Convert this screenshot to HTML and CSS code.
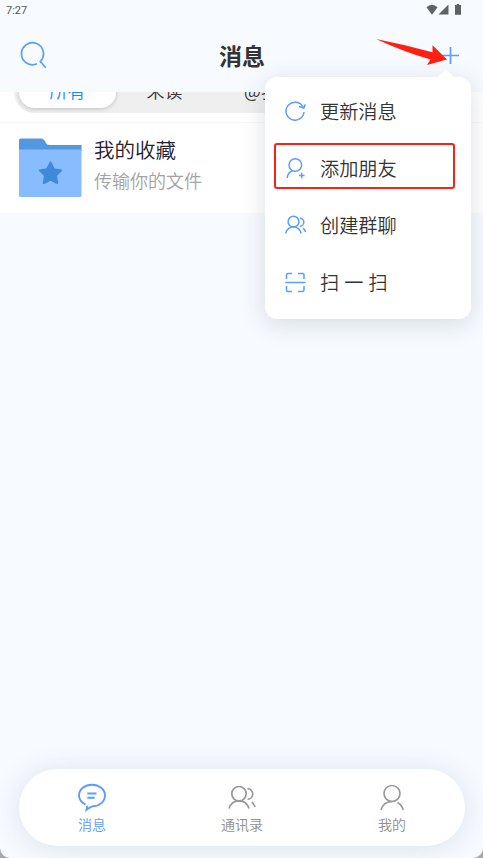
FILE: index.html
```
<!DOCTYPE html>
<html lang="zh-CN">
<head>
	<meta charset="utf-8">
	<meta name="viewport" content="width=device-width, initial-scale=1">
	<title>消息</title>
	<link rel="stylesheet" href="styles.css">
</head>
<body>
	<div class="screen">
		<div class="top">
			<div class="status">
				<span>7:27</span>
				<svg class="status-icons" width="36" height="12" viewBox="0 0 36 12">
					<path d="M0.5 3.2Q6 -1.8 11.5 3.2L6 10.8Z"/>
					<path d="M22.5 0.5V10.5H12.5Z"/>
					<path d="M30.8 0H33.2V1H35V10.8H29V1H30.8Z"/>
				</svg>
			</div>
			<div class="header">
				<svg class="icon" width="28" height="28" viewBox="0 0 28 28">
					<path d="M17 22.8A11 11 0 1 1 20.3 20.5L25.8 26.8" stroke-width="1.7"/>
				</svg>
				<h1>消息</h1>
				<svg class="icon plus" width="20" height="20" viewBox="0 0 20 20">
					<path d="M1.5 10.5H19M10.5 2V19" stroke-width="1.7"/>
				</svg>
			</div>
		</div>

		<div class="tabs-wrap">
			<div class="tabs">
				<div class="tab active">所有</div>
				<div class="tab">未读</div>
				<div class="tab">@我</div>
			</div>
		</div>

		<div class="chat">
			<svg class="folder" width="63" height="60" viewBox="0 0 63 60">
				<path d="M0 12V2Q0 .5 1.5 .5H22Q25 .5 27 5Q28 7 30 7H62.5V13H0Z" fill="#5298de"/>
				<path d="M0 11.5H62.5V57.5Q62.5 59 61 59H1.5Q0 59 0 57.5Z" fill="#87bcff"/>
				<path d="M31.5 24.5L34.9 31.3L42.2 32.4L37 37.6L38.2 45L31.5 41.7L24.8 45L26 37.6L20.8 32.4L28.1 31.3Z" fill="#3f8ad8" stroke="#3f8ad8" stroke-width="2" stroke-linejoin="round"/>
			</svg>
			<div class="chat-text">
				<div class="name">我的收藏</div>
				<div class="desc">传输你的文件</div>
			</div>
		</div>

		<div class="nav">
			<div class="nav-item active">
				<svg class="icon" width="30" height="30" viewBox="0 0 30 30">
					<path d="M8.5 22.7C4.5 20.5 2 17 2 13.5C2 7.3 7.8 2.7 15 2.7S28 7.5 28 13.5S22.5 24.3 15.5 24.3Q13 25 9.5 27.7L10.3 23.8M10.3 11.5H19.5M10.3 15.7H17.7" stroke-width="1.9"/>
				</svg>
				<span>消息</span>
			</div>
			<div class="nav-item">
				<svg class="icon" width="30" height="30" viewBox="0 0 30 30">
					<circle cx="12" cy="11.7" r="7.2"/>
					<path d="M2 26.5Q4.5 18.9 12 18.9Q19.5 18.9 22 26.5M20.5 6.7A5.3 5.3 0 1 1 20.5 17.3M24.8 20Q27 21.5 28 25"/>
				</svg>
				<span>通讯录</span>
			</div>
			<div class="nav-item">
				<svg class="icon" width="30" height="30" viewBox="0 0 30 30">
					<circle cx="15" cy="11.5" r="8"/>
					<path d="M4 28Q6 20 15 19.5M20.5 20.5Q25 23 26.3 28"/>
				</svg>
				<span>我的</span>
			</div>
		</div>

		<!-- 右上角選單 -->
		<div class="menu">
			<div class="menu-item">
				<svg class="icon" width="24" height="24" viewBox="0 0 24 24">
					<path d="M21 13A9 9 0 1 1 20 8"/>
					<path d="M16 7.5L20.7 9L22.2 5.5" stroke-width="1.8"/>
				</svg>
				<span>更新消息</span>
			</div>
			<div class="menu-item marked">
				<svg class="icon" width="24" height="24" viewBox="0 0 24 24">
					<circle cx="12.3" cy="9" r="6.3"/>
					<path d="M4.2 22Q5 16 9.8 14.8M16 19.5H21.5M18.7 16.8V22.3"/>
				</svg>
				<span>添加朋友</span>
			</div>
			<div class="menu-item">
				<svg class="icon" width="24" height="24" viewBox="0 0 24 24">
					<circle cx="10.5" cy="8.7" r="5.4"/>
					<path d="M2.5 20.5Q4.5 14.1 10.5 14.1Q16.5 14.1 18.2 20.5M16.8 5.2A4 4 0 1 1 16.8 13.2M20 15.2Q22 16.5 22.6 19"/>
				</svg>
				<span>创建群聊</span>
			</div>
			<div class="menu-item">
				<svg class="icon" width="24" height="24" viewBox="0 0 24 24">
					<path d="M3.5 9V5Q3.5 3.5 5 3.5H9M15 3.5H19.5Q21 3.5 21 5V9M21 16V20Q21 21.5 19.5 21.5H15M9 21.5H5Q3.5 21.5 3.5 20V16M2.3 12.5H22.5"/>
				</svg>
				<span class="scan">扫 一 扫</span>
			</div>
		</div>

		<svg class="arrow" width="72" height="30" viewBox="0 0 72 30">
			<path d="M0 1Q28 6.5 56.5 14.3L56.5 7.3L71 21.5L51 27L54.5 21.5Q28 14 0 1Z" fill="#fe2012"/>
		</svg>
	</div>
</body>
</html>
```

FILE: styles.css
```
* {
	box-sizing: border-box;
}
body {
	margin: 0;
	background: #a5a7aa;
	font-family: "Noto Sans CJK SC", sans-serif;
	font-weight: 350;
	color: #333;
}
.screen {
	position: relative;
	display: flex;
	flex-direction: column;
	height: 858px;
	overflow: hidden;
	background: #f7faff;
	border-radius: 0 0 10px 10px;
}
.icon {
	display: block;
	fill: none;
	stroke: #5c9dff;
	stroke-width: 1.5;
}
.top {
	height: 92px;
}
.status {
	display: flex;
	justify-content: space-between;
	height: 20px;
	padding: 4px 21px 0 6px;
	font: 11px/13px Roboto, sans-serif;
	color: #555;
}
.status-icons {
	fill: #5e6062;
}
.header {
	display: flex;
	align-items: center;
	justify-content: space-between;
	height: 69px;
	padding: 0 23px 0 20px;
}
h1 {
	margin: 0 4px 0 0;
	font-size: 23px;
	line-height: 30px;
	font-weight: 700;
}
.tabs-wrap {
	height: 31px;
	padding: 0 14px;
	overflow: hidden;
	background: #fff;
	border-bottom: 1px solid #f7f7f7;
}
.tabs {
	display: flex;
	height: 41px;
	margin-top: -20px;
	padding: 5px;
	border-radius: 21px;
	background: #efefef;
}
.tab {
	width: 97px;
	height: 31px;
	border-radius: 16px;
	font-size: 18px;
	line-height: 26px;
	text-align: center;
}
.tab.active {
	color: #1989fa;
	background: #fff;
	box-shadow: 0 1px 4px rgba(0, 0, 0, .2);
}
.chat {
	display: flex;
	height: 90px;
	padding: 15px 19px;
	background: #fff;
}
.chat-text {
	margin: -4px 0 0 12px;
}
.name {
	font-size: 20.5px;
	line-height: 31px;
	color: #222032;
}
.desc {
	font-size: 18px;
	line-height: 30px;
	color: #a3a3a3;
}
.nav {
	display: flex;
	height: 77px;
	margin: auto 18px 12px 19px;
	border-radius: 39px;
	background: #fff;
	box-shadow: 0 2px 28px rgba(70, 90, 120, .15);
}
.nav-item {
	display: flex;
	flex: 0 0 150px;
	flex-direction: column;
	align-items: center;
	margin-left: -2px;
	padding-top: 13px;
	font-size: 14px;
	line-height: 25px;
	color: #909090;
}
.nav-item + .nav-item {
	margin-left: 0;
}
.nav-item .icon {
	stroke: #999;
	stroke-width: 1.7;
}
.nav-item.active {
	color: #5c9dff;
}
.nav-item.active .icon {
	stroke: #5c9dff;
}
.menu {
	position: absolute;
	left: 265px;
	top: 77px;
	width: 206px;
	height: 242px;
	padding: 9px;
	border-radius: 12px;
	background: #fff;
	box-shadow: 0 5px 24px rgba(50, 65, 90, .16);
}
.menu::before {
	content: "";
	position: absolute;
	right: 17px;
	top: -8px;
	border: 8px solid transparent;
	border-top: 0;
	border-bottom-color: #fff;
}
.menu-item {
	display: flex;
	align-items: center;
	gap: 13px;
	width: 181px;
	height: 46px;
	margin-bottom: 11.3px;
	padding: 3px 0 0 7px;
	border: 2px solid transparent;
	border-radius: 3px;
	font-size: 19.2px;
	line-height: 30px;
}
.menu-item.marked {
	border-color: #fe2012;
}
.scan {
	word-spacing: .8px;
}
.arrow {
	position: absolute;
	left: 376px;
	top: 38px;
}
```
